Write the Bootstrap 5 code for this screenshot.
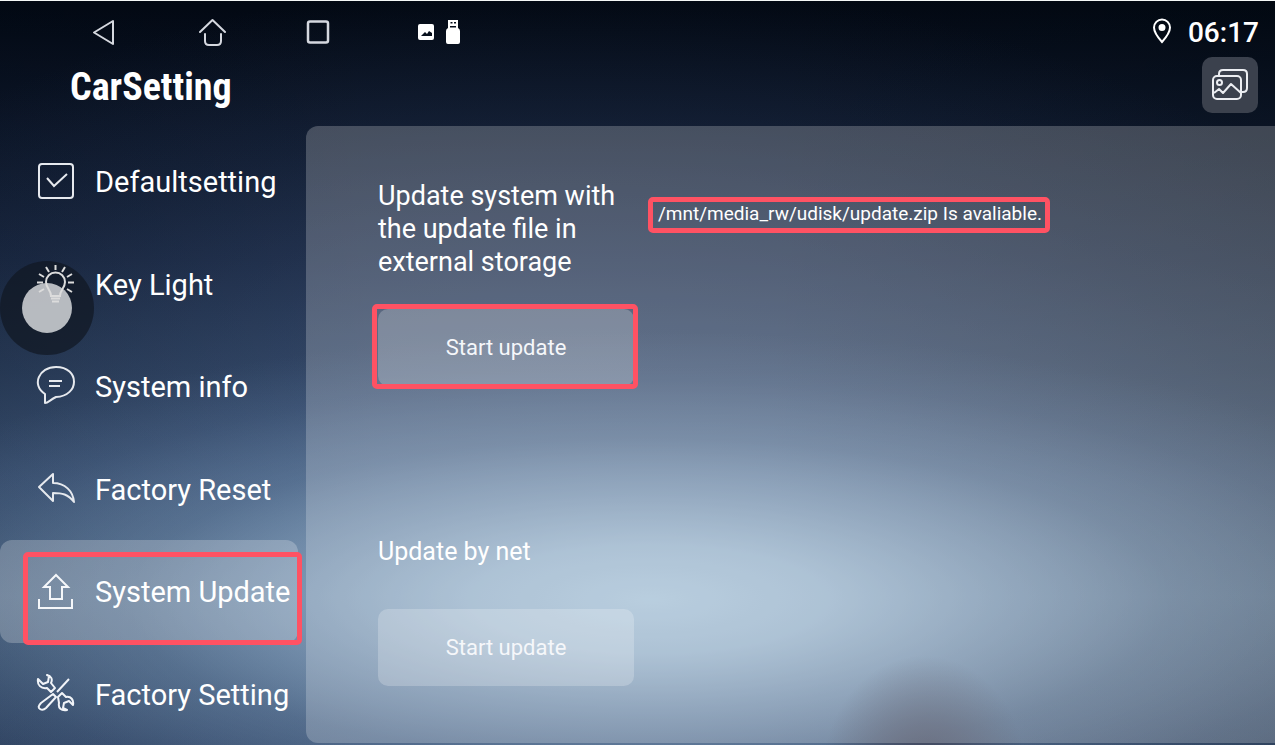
<!DOCTYPE html>
<html lang="en">
<head>
<meta charset="utf-8">
<meta name="viewport" content="width=device-width, initial-scale=1">
<title>CarSetting</title>
<link href="https://cdn.jsdelivr.net/npm/bootstrap@5.3.0/dist/css/bootstrap.min.css" rel="stylesheet">
<style>
  body {
    font-family: Roboto, "Liberation Sans", sans-serif;
    color: #fff;
    border-top: 1px solid #f4f7f6;
    background:
      radial-gradient(ellipse 8% 16% at 72.5% 104%, rgba(62,62,80,.85), rgba(65,68,88,.55) 45%, rgba(70,80,100,0)),
      radial-gradient(ellipse 68% 36% at 51% 80.5%, rgba(170,197,218,.94), rgba(165,192,214,.84) 20%, rgba(150,178,203,.6) 40%, rgba(130,160,188,.32) 60%, rgba(110,140,175,.12) 82%, rgba(90,120,160,0)),
      radial-gradient(ellipse 75% 75% at 45% 72%, rgba(90,115,155,.36), rgba(80,105,148,.27) 35%, rgba(60,85,125,.1) 75%, rgba(50,80,120,0)),
      linear-gradient(to right, rgba(0,8,20,.2), rgba(0,8,20,0) 30%, rgba(0,8,20,0) 60%, rgba(0,8,14,.25)),
      linear-gradient(#020812, #0e182b 17%, #1a2842 35%, #293c58 50%, #3e5677 64%, #526d8b 80%, #384e6e);
  }
  .status-row { height: 61px; }
  .title-row { height: 64px; padding: 0 17px 0 70px; }
  .nav-keys { padding-left: 91px; gap: 82px; }
  .sys-btn { background: none; border: 0; padding: 0; line-height: 0; color: #d5d8df; }
  .notices { margin-left: 83px; gap: 11px; }
  .clock { font-size: 28px; line-height: 34px; padding-top: 2px; font-weight: 500; }
  .app-title { font-family: "Liberation Sans Narrow", "Roboto Condensed", "Liberation Sans", sans-serif; font-weight: 700; font-size: 38px; line-height: 50px; }
  .gallery-btn { width: 56px; height: 56px; border-radius: 10px; background: #3b414d; margin-top: -5px; }
  .side { width: 306px; padding-top: 4px; }
  .side-item { color: #fff; text-decoration: none; font-size: 29px; line-height: 34px; padding-left: 36px; gap: 19px; width: 298px; border-radius: 12px; white-space: nowrap; }
  .side-item svg { flex: none; }
  .side-item span { padding-top: 2px; }
  .side-item.active { background: rgba(255,255,255,.23); }
  .over-dot { position: relative; z-index: 2; }
  .callout { border: 5px solid #ff5263; border-radius: 5px; }
  .side-callout { position: absolute; inset: 12px 4px -2px 23px; }
  .touch-dot { position: absolute; left: 0; top: 28px; width: 94px; height: 94px; border-radius: 50%; background: rgba(17,24,35,.72); z-index: 1; }
  .touch-dot::after { content: ""; position: absolute; inset: 22px; border-radius: 50%; background: rgba(224,226,229,.8); }
  .panel { background: rgba(255,255,255,.22); border-radius: 12px 0 0 12px; padding: 54px 72px 0; margin-bottom: 2px; }
  .task { width: 256px; }
  .task-title { font-size: 27px; line-height: 33px; font-weight: 400; margin: 0 0 30px; }
  .task-sub { font-size: 25px; line-height: 32px; font-weight: 400; margin: 150px 0 41px; }
  .task-btn { width: 256px; height: 77px; border: 0; border-radius: 10px; color: #f5f7fa; font-size: 22px; background: rgba(255,255,255,.22); }
  .btn-callout { position: absolute; inset: -5px -4px -3px -6px; pointer-events: none; }
  .file-note { margin: 17px 0 0 14px; height: 36px; padding: 0 3px 0 5px; font-size: 19px; line-height: 24px; white-space: nowrap; }
</style>
</head>
<body class="min-vh-100 d-flex flex-column">
<header>
  <div class="status-row d-flex align-items-center">
    <div class="nav-keys d-flex align-items-center">
      <button class="sys-btn" aria-label="Back"><svg width="26" height="30" fill="none" stroke="currentColor" stroke-width="2" stroke-linejoin="round"><path d="M22 4v23L3 15.500z"/></svg></button>
      <button class="sys-btn" aria-label="Home"><svg width="28" height="30" fill="none" stroke="currentColor" stroke-width="2" stroke-linecap="round" stroke-linejoin="round"><path d="M1 15 13.500 3 26 15M6 17v7q0 4 4 4h8q4 0 4-4v-7"/></svg></button>
      <button class="sys-btn" aria-label="Recent apps"><svg width="26" height="30" fill="none" stroke="currentColor" stroke-width="2.500" overflow="visible"><rect x="-1" y="4.500" width="20" height="21" rx="2"/></svg></button>
    </div>
    <div class="notices d-flex align-items-center">
      <svg width="16" height="16" fill="#fff"><path fill-rule="evenodd" d="M2 0h12q2 0 2 2v12q0 2-2 2H2q-2 0-2-2V2q0-2 2-2zM3 12h11V9l-3-2-2 3-2-2z"/></svg>
      <svg width="16" height="26" fill="#fff"><path fill-rule="evenodd" d="M3 1h10v8q2 1 2 3v11q0 2-2 2H3q-2 0-2-2V12q0-2 2-3zM5.500 3v1.500h2V3zm3.500 0v1.500h2V3zM5 7h6v1.500H5z"/></svg>
    </div>
    <div class="ms-auto d-flex align-items-center gap-3 pe-3">
      <svg width="20" height="28" fill="none" stroke="#fff" stroke-width="2"><path d="M10 24Q2 15 2 9.500a8 8 0 0 1 16 0Q18 15 10 24z"/><circle cx="10" cy="9.500" r="2.500" fill="#fff"/></svg>
      <span class="clock">06:17</span>
    </div>
  </div>
  <div class="title-row d-flex justify-content-between">
    <h1 class="app-title m-0">CarSetting</h1>
    <button class="gallery-btn btn p-0 border-0 align-self-start" aria-label="Wallpapers"><svg width="38" height="34" fill="none" stroke="#eceef2" stroke-width="2" stroke-linejoin="round"><path d="M8 8V6q0-4 4-4h20q4 0 4 4v14q0 4-4 4h-2"/><rect x="2" y="8" width="28" height="23" rx="4"/><circle cx="8.500" cy="14.500" r="2.500"/><path d="m3 25 5-4 4 4 8-9 10 9"/></svg></button>
  </div>
</header>
<div class="d-flex flex-grow-1">
  <nav class="side d-flex flex-column flex-shrink-0" aria-label="Settings">
    <a href="#" class="side-item d-flex align-items-center flex-fill"><svg width="40" height="40" fill="none" stroke="#e6e9ee" stroke-width="2"><rect x="3" y="3" width="34" height="34" rx="3"/><path d="m11 17 7 8 13-12"/></svg><span>Defaultsetting</span></a>
    <div class="position-relative d-flex flex-fill">
      <a href="#" class="side-item over-dot d-flex align-items-center"><svg width="40" height="40" fill="none" stroke="#dcdcdc" stroke-width="2"><path d="M15 32c0-6-5-8-5-14a9.500 9.500 0 0 1 19 0c0 6-5 8-5 14zM15 34.500h9M16 37.500h7M19.500 1v5M10 3l3 5M29 3l-3 5M3 10l5 3M36 10l-5 3M1 18.500h6M32 18.500h6M3 28l5-3M36 28l-5-3"/></svg><span>Key Light</span></a>
      <span class="touch-dot"></span>
    </div>
    <a href="#" class="side-item d-flex align-items-center flex-fill"><svg width="40" height="40" fill="none" stroke="#e6e9ee" stroke-width="2" stroke-linejoin="round"><path d="M9 28C-5 19 3 1 20 1c24 0 24 29 0 30-6 3-8 6-11 6z"/><path d="M13 15h13M13 20h11"/></svg><span>System info</span></a>
    <a href="#" class="side-item d-flex align-items-center flex-fill"><svg width="40" height="40" fill="none" stroke="#e6e9ee" stroke-width="2" stroke-linejoin="round"><path d="M3 18 17 5v9c12 0 20 8 21 19-6-8-12-9-21-9v8z"/></svg><span>Factory Reset</span></a>
    <div class="position-relative d-flex flex-fill">
      <a href="#" class="side-item active d-flex align-items-center" aria-current="page"><svg width="40" height="40" fill="none" stroke="#f5f7fa" stroke-width="2"><path d="M20 4 32 16h-6v12H14V16H8zM3 28v9h33v-9"/></svg><span>System Update</span></a>
      <span class="callout side-callout"></span>
    </div>
    <a href="#" class="side-item d-flex align-items-center flex-fill"><svg width="40" height="40" fill="none" stroke="#f1f4f8" stroke-width="2" stroke-linejoin="round"><path d="M33 5 21 18M17 20 5 29q-4 4-1 6t6-1l10-11zM2 5l5 5 5-2 1-6-2-1c4 1 6 4 4 8l4 5-4 4-4-4C5 15 1 11 2 5zM22 23l4-4 4 4c5-1 8 3 7 8l-4-4-5 2-1 5 4 2c-6 1-9-2-8-7z"/></svg><span>Factory Setting</span></a>
  </nav>
  <main class="panel d-flex align-items-start flex-fill">
    <div class="task flex-shrink-0">
      <h2 class="task-title">Update system with the update file in external storage</h2>
      <div class="position-relative">
        <button class="task-btn d-block">Start update</button>
        <span class="callout btn-callout"></span>
      </div>
      <h2 class="task-sub">Update by net</h2>
      <button class="task-btn d-block">Start update</button>
    </div>
    <p class="callout file-note">/mnt/media_rw/udisk/update.zip Is avaliable.</p>
  </main>
</div>
<script src="https://cdn.jsdelivr.net/npm/bootstrap@5.3.0/dist/js/bootstrap.bundle.min.js"></script>
</body>
</html>
